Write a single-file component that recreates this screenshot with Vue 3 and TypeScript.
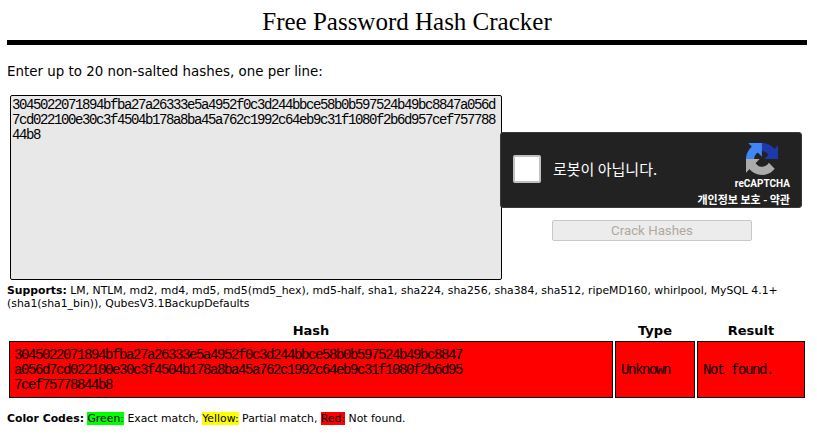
<template>
  <div class="page">
    <h1 class="title">Free Password Hash Cracker</h1>
    <hr class="rule" />
    <p class="intro">Enter up to 20 non-salted hashes, one per line:</p>
    <form class="crack-form" @submit.prevent>
      <textarea class="hash-input" spellcheck="false" :value="hash"></textarea>
      <div class="side">
        <div class="captcha">
          <span class="check"></span>
          <span class="captcha-label">로봇이 아닙니다.</span>
          <div class="brand">
            <svg class="logo" viewBox="0 0 64 64" width="32" height="32" aria-hidden="true">
              <path fill="#1c3aa9" d="M64 31.955l-.033-1.37V4.687l-7.16 7.16C50.948 4.674 42.033.093 32.05.093c-10.4 0-19.622 4.96-25.458 12.64l11.736 11.86a15.55 15.55 0 0 1 4.754-5.334c2.05-1.6 4.952-2.906 8.968-2.906.485 0 .86.057 1.135.163 4.976.393 9.29 3.14 11.83 7.124l-8.308 8.308 32.29.005" />
              <path fill="#4285f4" d="M31.862.094l-1.37.033H4.594l7.16 7.16C4.58 13.14 0 22.054 0 32.037c0 10.4 4.96 19.622 12.64 25.458l11.86-11.736a15.55 15.55 0 0 1-5.334-4.754c-1.6-2.05-2.906-4.952-2.906-8.968 0-.485.057-.86.163-1.135.393-4.976 3.14-9.29 7.124-11.83l8.308 8.308.005-32.29" />
              <path fill="#ababab" d="M.001 32.037l.033 1.37v25.898l7.16-7.16c5.86 7.173 14.774 11.754 24.76 11.754 10.4 0 19.622-4.96 25.458-12.64l-11.736-11.86a15.55 15.55 0 0 1-4.754 5.334c-2.05 1.6-4.952 2.906-8.968 2.906-.485 0-.86-.057-1.135-.163-4.976-.393-9.29-3.14-11.83-7.124l8.308-8.308-32.29-.005" />
            </svg>
            <span class="brand-name">reCAPTCHA</span>
            <span class="brand-links">개인정보 보호 - 약관</span>
          </div>
        </div>
        <button class="submit" type="submit" disabled>Crack Hashes</button>
      </div>
    </form>
    <p class="supports">
      <b>Supports:</b> LM, NTLM, md2, md4, md5, md5(md5_hex), md5-half, sha1, sha224, sha256, sha384, sha512, ripeMD160, whirlpool, MySQL 4.1+ (sha1(sha1_bin)), QubesV3.1BackupDefaults
    </p>
    <table class="results">
      <thead>
        <tr>
          <th>Hash</th>
          <th>Type</th>
          <th>Result</th>
        </tr>
      </thead>
      <tbody>
        <tr>
          <td class="col-hash">
            <div v-for="line in hashLines" :key="line">{{ line }}</div>
          </td>
          <td class="col-type">Unknown</td>
          <td class="col-result">Not found.</td>
        </tr>
      </tbody>
    </table>
    <p class="codes">
      <b>Color Codes:</b>&nbsp;<span class="green">Green:</span> Exact match,
      <span class="yellow">Yellow:</span> Partial match,
      <span class="red">Red:</span> Not found.
    </p>
  </div>
</template>

<script setup lang="ts">
const hash =
  '3045022071894bfba27a26333e5a4952f0c3d244bbce58b0b597524b49bc8847a056d7cd022100e30c3f4504b178a8ba45a762c1992c64eb9c31f1080f2b6d957cef75778844b8'

const hashLines: string[] = hash.match(/.{1,64}/g) ?? []
</script>

<style>
html,
body {
  margin: 0;
  background: #fff;
}
</style>

<style scoped>
.page {
  width: 800px;
  margin-left: 7px;
  font-family: "DejaVu Sans", Verdana, sans-serif;
  color: #000;
}
.title {
  margin: 0;
  height: 40px;
  line-height: 43px;
  font-family: "Liberation Serif", serif;
  font-size: 25px;
  font-weight: 400;
  text-align: center;
}
.rule {
  height: 5px;
  margin: 0;
  border: 0;
  background: #000;
}
.intro {
  margin: 19px 0 0;
  font-size: 13.4px;
  line-height: 16px;
}
.crack-form {
  display: flex;
  margin: 15px 0 0 3px;
}
.hash-input {
  box-sizing: border-box;
  width: 492px;
  height: 185px;
  margin: 0;
  padding: 2px 2px 2px 1px;
  flex: none;
  border: 1px solid #000;
  border-radius: 2px;
  background: #e8e8e8;
  color: #000;
  font-family: "Liberation Mono", monospace;
  font-size: 14px;
  letter-spacing: -1.4px;
  line-height: 15px;
  resize: none;
  overflow: hidden;
  word-break: break-all;
}
.side {
  display: flex;
  flex-direction: column;
  align-items: center;
  width: 302px;
  margin: 37px 0 0 -2px;
  position: relative;
}
.captcha {
  box-sizing: border-box;
  display: flex;
  align-items: flex-start;
  width: 302px;
  height: 76px;
  border: 1px solid #3a3a3a;
  border-radius: 3px;
  background: #222;
  color: #fff;
}
.check {
  box-sizing: border-box;
  width: 28px;
  height: 28px;
  margin: 22px 0 0 12px;
  flex: none;
  border: 2px solid #c1c1c1;
  border-radius: 2px;
  background: #fff;
}
.captcha-label {
  margin: 26px 0 0 12px;
  flex: 1;
  font-family: "Noto Sans CJK KR", sans-serif;
  font-size: 15px;
  line-height: 20px;
}
.brand {
  display: flex;
  flex-direction: column;
  align-items: flex-end;
  margin-right: 11px;
}
.logo {
  margin: 10px 12px 0 0;
}
.brand-name {
  margin-top: 3px;
  font-family: Roboto, sans-serif;
  font-size: 10px;
  font-weight: 700;
  line-height: 12px;
}
.brand-links {
  margin-top: 2px;
  white-space: nowrap;
  font-family: "Noto Sans CJK KR", sans-serif;
  font-size: 11px;
  font-weight: 700;
  line-height: 14px;
}
.submit {
  box-sizing: border-box;
  width: 200px;
  height: 21px;
  margin: 12px 0 0 2px;
  padding: 0;
  border: 1px solid #c8c8c8;
  border-radius: 2px;
  background: #ececec;
  color: #b0a8a0;
  font-family: Roboto, sans-serif;
  font-size: 13.3px;
}
.supports {
  margin: 4px 0 0;
  font-size: 10.85px;
  line-height: 13px;
}
.results {
  width: 800px;
  margin: 11px 0 0;
  border-collapse: separate;
  border-spacing: 2px;
}
.results th {
  padding: 0;
  font-size: 13px;
  font-weight: 700;
  line-height: 16px;
  text-align: center;
}
.results td {
  box-sizing: border-box;
  height: 57px;
  padding: 2px 5px 0;
  border: 1px solid #000;
  background: #f00;
  font-family: "Liberation Mono", monospace;
  font-size: 14px;
  letter-spacing: -1.4px;
  line-height: 15px;
}
.results .col-hash {
  width: 604px;
  padding-left: 4px;
  word-break: break-all;
}
.col-type {
  width: 80px;
}
.col-result {
  width: 108px;
}
.codes {
  margin: 12px 0 0;
  font-size: 10.85px;
  line-height: 13px;
}
.green {
  background: #0f0;
}
.yellow {
  background: #ff0;
}
.red {
  background: #f00;
}
</style>
